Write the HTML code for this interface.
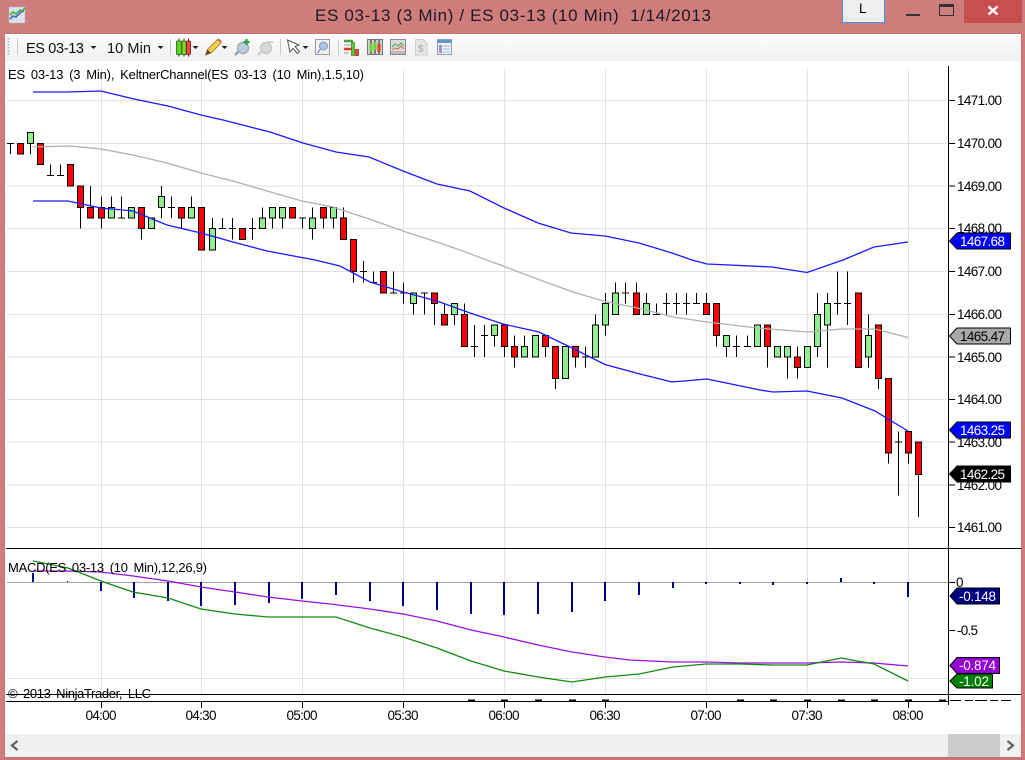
<!DOCTYPE html>
<html>
<head>
<meta charset="utf-8">
<title>ES 03-13 (3 Min) / ES 03-13 (10 Min) 1/14/2013</title>
<style>
html,body{margin:0;padding:0;background:#cf7c7d;width:1025px;height:760px;overflow:hidden}
svg{display:block;position:absolute;left:0;top:0}
text{font-family:"Liberation Sans",sans-serif;fill:#000;white-space:pre}
.ax{font-size:13.5px}
.w{fill:#fff}
.lb{font-size:13px;word-spacing:2.5px}
</style>
</head>
<body>
<svg width="1025" height="760" viewBox="0 0 1025 760" xmlns="http://www.w3.org/2000/svg">
<defs>
<linearGradient id="tb" x1="0" y1="0" x2="0" y2="1"><stop offset="0" stop-color="#fdfdfd"/><stop offset="1" stop-color="#efefef"/></linearGradient>
</defs>
<!-- frame -->
<rect width="1025" height="760" fill="#cf7c7d"/>
<rect x="0" y="758" width="1025" height="2" fill="#c97576"/>
<rect x="4.5" y="33.5" width="1017" height="724" fill="#b86a6b"/>
<rect x="5" y="34" width="1016" height="723" fill="#fff"/>

<!-- title bar -->
<g shape-rendering="auto">
<rect x="9" y="7" width="16" height="16" fill="#e4e8ee" stroke="#aab2c0" stroke-width=".6"/>
<path d="M9 11.5h16M9 15.5h16M9 19.5h16M13 7v16M17 7v16M21 7v16" stroke="#c3c9d3" stroke-width=".6" fill="none"/>
<path d="M10 19l3-3 3 1 5-5 3-1" stroke="#2f6fc4" stroke-width="1.6" fill="none"/>
<path d="M10 15l3-3 3 2 4-4 2 1 3-3" stroke="#46b03c" stroke-width="1.6" fill="none"/>
</g>
<text x="315" y="21" font-size="17" textLength="396" lengthAdjust="spacing" style="fill:#1c1c1c">ES 03-13 (3 Min) / ES 03-13 (10 Min)  1/14/2013</text>

<rect x="842.5" y="-2" width="42" height="24.5" fill="#efefef" stroke="#3d95ee" stroke-width="1"/>
<text x="859" y="13" font-size="13.5">L</text>
<rect x="906" y="14" width="14" height="2" fill="#333"/>
<rect x="939.5" y="4.5" width="14" height="11" fill="none" stroke="#333"/>
<rect x="939" y="4" width="15" height="3" fill="#333"/>
<rect x="964" y="0" width="58" height="23" fill="#c65050"/>
<path d="M988.5 6.5l9 8M997.5 6.5l-9 8" stroke="#fff" stroke-width="2.4" fill="none"/>

<!-- toolbar -->
<rect x="5" y="34" width="1016" height="27" fill="url(#tb)"/>
<path d="M8.5 38v17" stroke="#b5b5b5" stroke-width="2" stroke-dasharray="1.5 1.5" fill="none"/>
<path d="M17.5 38v17M170.5 39v16M280.5 39v16M338.5 39v16" stroke="#c8c8c8" fill="none" shape-rendering="crispEdges"/>
<text x="26" y="53" font-size="14.5" textLength="58" lengthAdjust="spacing" style="fill:#111">ES 03-13</text>
<text x="107" y="53" font-size="14.5" textLength="44" lengthAdjust="spacing" style="fill:#111">10 Min</text>
<path d="M90.500 46h6l-3 3zM157.500 46h6l-3 3zM192.500 46h6l-3 3zM221.500 46h6l-3 3zM302.500 46h6l-3 3z" fill="#222"/>

<!-- candle icon -->
<path d="M179 38.500v18M184 38.500v18M188.500 38.500v18" stroke="#333" fill="none"/>
<rect x="176.500" y="41" width="5" height="13.500" rx="1" fill="#5fd21f" stroke="#3e7a1f"/>
<rect x="182" y="41" width="4" height="13.500" rx="1" fill="#7bdc2a" stroke="#3e7a1f"/>
<rect x="186.500" y="41" width="4" height="13.500" rx="1" fill="#ee4a3a" stroke="#8c2a20"/>
<!-- pencil -->
<path d="M205.500 55l2-5.500 10-10 3.500 3.500-10 10z" fill="#f5d24a" stroke="#8f7a2c" stroke-width=".8"/>
<path d="M217.500 39.500l1.500-1 3 3-1 1.500z" fill="#e86a5a"/>
<path d="M205.500 55l2-5.500 3.500 3.500z" fill="#5a4a2a"/>
<!-- magnifier plus -->
<path d="M235 55l5-5" stroke="#8fa0b4" stroke-width="2.500" fill="none"/>
<circle cx="243" cy="48" r="5.500" fill="#b9cfe2" stroke="#a8a8a8" stroke-width="1.500"/>
<path d="M243.500 42h6M246.500 39v6" stroke="#1ea83a" stroke-width="2.200" fill="none"/>
<!-- magnifier disabled -->
<path d="M258 55l5-5" stroke="#cfcfcf" stroke-width="2.500" fill="none"/>
<circle cx="266" cy="48" r="5.500" fill="#d8d8d8" stroke="#c8c8c8" stroke-width="1.500"/>
<path d="M268 42h5" stroke="#cfcfcf" stroke-width="2" fill="none"/>
<!-- cursor -->
<path d="M287.500 40l2.500 12 3-3.500 4.500 5 2-2-4.500-5 4-1.500z" fill="#fff" stroke="#555" stroke-width="1"/>
<!-- zoom box -->
<rect x="315.500" y="39.500" width="14" height="15" fill="#f2f2f2" stroke="#9a9a9a"/>
<circle cx="323.500" cy="46" r="4" fill="#a9c6e4" stroke="#8a9bb0"/>
<path d="M317.500 53l3-4" stroke="#8a9bb0" stroke-width="1.500"/>
<!-- indicators icon -->
<path d="M344 41h9" stroke="#44aa33" stroke-width="2.500"/><path d="M344 49h9" stroke="#dd3a2e" stroke-width="2.500"/><path d="M344 45h7M344 53h5" stroke="#bbb" stroke-width="1.500"/>
<rect x="351.500" y="42.500" width="3" height="13" fill="#5fc52f" stroke="#3e7a1f" stroke-width=".7"/>
<rect x="355.500" y="49.500" width="3" height="6" fill="#e0503e" stroke="#8c2a20" stroke-width=".7"/>
<!-- chart icon -->
<rect x="367.500" y="39.500" width="15" height="15" fill="#d3d3d3" stroke="#777"/>
<path d="M371 40v14M375 40v14M379 40v14" stroke="#222"/>
<rect x="369.500" y="44" width="3" height="8" fill="#6fd12b"/><rect x="373.500" y="42" width="3" height="8" fill="#6fd12b"/><rect x="377.500" y="44" width="3" height="8" fill="#e0402e"/>
<!-- strategy chart icon -->
<rect x="390.500" y="39.500" width="15" height="15" fill="#dcdcdc" stroke="#8a8a8a"/>
<path d="M392 47l3-3 3 2 3-3 3 3" stroke="#4aa84a" fill="none"/><path d="M392 50l3-2 3 1 3-3 3 3" stroke="#d86a5a" fill="none"/>
<rect x="391" y="51" width="14" height="3" fill="#bbb"/>
<!-- $ doc -->
<path d="M415.500 39.500h8l3.500 3.500v12h-11.500z" fill="#e6e6e6" stroke="#cfcfcf"/>
<text x="418" y="52" font-size="10" font-weight="bold" style="fill:#b4b4b4">$</text>
<!-- grid doc -->
<rect x="437.500" y="39.500" width="14" height="15" fill="#eef2f6" stroke="#8fa0b4"/>
<rect x="438" y="40" width="13" height="3" fill="#5f97c8"/>
<rect x="439" y="45" width="3" height="8" fill="#a58cd6"/>
<path d="M443 46h7M443 49h7M443 52h7" stroke="#a9b6c4"/>

<!-- grid -->
<g shape-rendering="crispEdges" fill="none" stroke="#e2e2e2">
<path d="M101.500 69V694M201.500 69V694M302.500 69V694M403.500 69V694M504.500 69V694M605.500 69V694M706.500 69V694M807.500 69V694M908.500 69V694"/>
<path d="M7 100.500H948M7 143.500H948M7 186H948M7 228.500H948M7 271.500H948M7 314.500H948M7 357H948M7 399.500H948M7 442H948M7 485H948M7 527.500H948M7 678.500H948"/>
</g>

<!-- candles -->
<g shape-rendering="crispEdges">
<path fill="none" stroke="#000" d="M10.500 143.500V154M7 143.500h7M30.500 143.500V154M50.500 164.500V175.500M47 175.500h7M60.500 164.500V175.500M57 175.500h7M80.500 207.500V228.500M90.500 186V207.500M101.500 196.500V228.500M111.500 196.500V207.500M121.500 196.500V218M118 218h7M141.500 228.500V239.500M161.500 186V218M171.500 196.500V218M168 207.500h7M181.500 218V228.500M191.500 196.500V207.500M212.500 218V228.500M222.500 218V228.500M219 228.500h7M232.500 218V239.500M229 228.500h7M252.500 218V239.500M249 228.500h7M262.500 207.500V218M272.500 218V228.500M282.500 218V228.500M302.500 218V228.500M299 218h7M312.500 207.500V239.500M323.500 218V228.500M333.500 218V228.500M343.500 207.500V218M353.500 271.500V282.500M363.500 261V282.500M360 271.500h7M373.500 271.500V282.500M370 282.500h7M393.500 271.500V293M390 293h7M403.500 282.500V303.500M400 293h7M413.500 303.500V314.500M424.500 293V314.500M421 293h7M434.500 303.500V325M444.500 303.500V314.500M454.500 314.500V325M464.500 303.500V314.500M474.500 325V357M471 346.500h7M484.500 325V357M481 335.500h7M494.500 335.500V346.500M504.500 346.500V357M514.500 335.500V367.500M524.500 335.500V346.500M545.500 346.500V357M555.500 378.500V389M575.500 357V367.500M585.500 346.500V367.500M582 357h7M595.500 314.500V325M605.500 293V335.500M615.500 282.500V293M625.500 282.500V303.500M622 293h7M636.500 282.500V293M646.500 293V303.500M656.500 303.500V314.500M653 314.500h7M666.500 293V314.500M663 303.500h7M676.500 293V314.500M673 303.500h7M686.500 293V314.500M683 303.500h7M696.500 293V303.500M693 303.500h7M706.500 293V303.500M716.500 335.500V346.500M726.500 346.500V357M736.500 335.500V357M733 346.500h7M747.500 335.500V346.500M744 346.500h7M767.500 346.500V367.500M787.500 357V378.500M797.500 346.500V378.500M817.500 293V357M827.500 293V367.500M837.500 271.500V314.500M834 303.500h7M847.500 271.500V325M844 303.500h7M868.500 314.500V367.500M878.500 378.500V389M888.500 453V463.500M898.500 431.500V495.500M895 442h7M908.500 453V463.500M918.500 474.500V517"/>
<path fill="#ff0000" stroke="#000" d="M17.500 143.500h6v10.500h-6zM37.500 143.500h6v21h-6zM67.500 164.500h6v21.500h-6zM77.500 186h6v21.500h-6zM87.500 207.500h6v10.500h-6zM98.500 207.500h6v10.500h-6zM138.500 207.500h6v21h-6zM178.500 207.500h6v10.500h-6zM198.500 207.500h6v42.500h-6zM239.500 228.500h6v11h-6zM289.500 207.500h6v10.500h-6zM320.500 207.500h6v10.500h-6zM340.500 218h6v21.500h-6zM350.500 239.500h6v32h-6zM380.500 271.500h6v21.500h-6zM431.500 293h6v10.500h-6zM441.500 314.500h6v10.500h-6zM461.500 314.500h6v32h-6zM501.500 325h6v21.500h-6zM511.500 346.500h6v10.500h-6zM542.500 335.500h6v11h-6zM552.500 346.500h6v32h-6zM572.500 346.500h6v10.500h-6zM633.500 293h6v21.500h-6zM703.500 303.500h6v11h-6zM713.500 303.500h6v32h-6zM764.500 325h6v21.500h-6zM794.500 357h6v10.500h-6zM855.500 293h6v74.500h-6zM875.500 325h6v53.500h-6zM885.500 378.500h6v74.500h-6zM905.500 431.500h6v21.500h-6zM915.500 442h6v32.500h-6z"/>
<path fill="#90ee90" stroke="#000" d="M27.500 132.500h6v11h-6zM108.500 207.500h6v10.500h-6zM128.500 207.500h6v10.500h-6zM148.500 218h6v10.500h-6zM158.500 196.500h6v11h-6zM188.500 207.500h6v10.500h-6zM209.500 228.500h6v21.500h-6zM259.500 218h6v10.500h-6zM269.500 207.500h6v10.500h-6zM279.500 207.500h6v10.500h-6zM309.500 218h6v10.500h-6zM330.500 207.500h6v10.500h-6zM410.500 293h6v10.500h-6zM451.500 303.500h6v11h-6zM491.500 325h6v10.500h-6zM521.500 346.500h6v10.500h-6zM532.500 335.500h6v21.500h-6zM562.500 346.500h6v32h-6zM592.500 325h6v32h-6zM602.500 303.500h6v21.500h-6zM612.500 293h6v21.500h-6zM643.500 303.500h6v11h-6zM723.500 335.500h6v11h-6zM754.500 325h6v21.500h-6zM774.500 346.500h6v10.500h-6zM784.500 346.500h6v10.500h-6zM804.500 346.500h6v21h-6zM814.500 314.500h6v32h-6zM824.500 303.500h6v21.500h-6zM865.500 335.500h6v21.500h-6z"/>
</g>

<!-- keltner -->
<g fill="none" stroke-width="1.300">
<polyline stroke="#b0b0b0" points="33,147 70,146 101,149 133,155 167,163 201,173 233,181 267,191 302,201 333,207 369,219 403,231 437,242 460,250 503,266 540,280 573,292 605,301.500 640,308.500 673,317 707,322 757,328 807,332 842,329 875,329 908,337.500"/>
<polyline stroke="#1a1aff" points="33,92 67,92 101,91 134,99 168,106 201,115 223,120 270,132 303,143 336,152 369,157 403,171 437,184 470,191 504,208 538,223 571,233 605,236 639,243 672,253 692,260 707,264 772,267 807,272.500 843,260 874,247 908,242"/>
<polyline stroke="#1a1aff" points="33,201 68,201 101,208 133,211 167,225 201,233 233,242 267,251 315,260 340,266 370,282 403,292 437,301 470,313 503,324 539,332 570,347 605,364.500 640,374 672,382 707,379 760,390 773,392 807,391 842,398 875,411 908,431"/>
</g>

<!-- axes -->
<g shape-rendering="crispEdges" fill="none" stroke="#000">
<path d="M948.500 66V705"/>
<path d="M6 548.500H1021M6 694.500H1021M6 701.500H948"/>
<path d="M948 100.500h7M948 143.500h7M948 186h7M948 228.500h7M948 271.500h7M948 314.500h7M948 357h7M948 399.500h7M948 442h7M948 485h7M948 527.500h7M948 582.500h7M948 630.500h7"/>
<path d="M101.500 702v6M201.500 702v6M302.500 702v6M403.500 702v6M504.500 702v6M605.500 702v6M706.500 702v6M807.500 702v6M908.500 702v6"/>
<path d="M468 700.500h7M501 700.500h7M535 700.500h7M569 700.500h7M602 700.500h7M737 700.500h7M770 700.500h7M804 700.500h7M838 700.500h7M871 700.500h7M905 700.500h7M939 700.500h7" stroke-width="2"/>
<path d="M950 700.500h11M965 700.500h8M975 700.500h12M990 700.500h8M1001 700.500h10"/>
</g>

<!-- MACD -->
<path d="M7 582.500H948" stroke="#a2a2a2" shape-rendering="crispEdges"/>
<g shape-rendering="crispEdges" fill="#000080">
<rect x="32" y="573" width="2" height="9"/><rect x="67" y="581" width="1" height="1"/><rect x="100" y="582" width="2" height="9"/><rect x="133" y="582" width="2" height="16"/><rect x="167" y="582" width="2" height="19"/><rect x="200" y="582" width="2" height="24"/><rect x="234" y="582" width="2" height="23"/><rect x="268" y="582" width="2" height="21"/><rect x="301" y="582" width="2" height="17"/><rect x="335" y="582" width="2" height="13"/><rect x="369" y="582" width="2" height="19"/><rect x="402" y="582" width="2" height="24"/><rect x="436" y="582" width="2" height="28"/><rect x="470" y="582" width="2" height="32"/><rect x="503" y="582" width="2" height="33"/><rect x="537" y="582" width="2" height="32"/><rect x="571" y="582" width="2" height="30"/><rect x="604" y="582" width="2" height="19"/><rect x="638" y="582" width="2" height="13"/><rect x="672" y="582" width="2" height="6"/><rect x="705" y="582" width="2" height="2"/><rect x="739" y="582" width="2" height="2"/><rect x="772" y="582" width="2" height="3"/><rect x="806" y="582" width="2" height="2"/><rect x="840" y="578" width="2" height="4"/><rect x="873" y="582" width="2" height="2"/><rect x="907" y="582" width="2" height="15"/>
</g>
<g fill="none" stroke-width="1.300">
<polyline stroke="#9a10e0" points="33,571 67,571 101,572 133,576 168,581 201,587 235,592 268,597 302,601 330,604 370,609 403,614 437,621 471,630 504,637 538,645 572,652 605,657 630,660 673,662 706,662 740,663 807,663 841,662 874,663 908,666"/>
<polyline stroke="#118a11" points="33,561 68,568 101,581 133,592 168,598 201,609 235,614 268,617 336,617 370,628 403,637 437,648 471,661 504,671 538,677 572,682 605,677 639,674 673,667 706,664 740,664 773,665 807,665 841,658 874,664 908,681"/>
</g>

<!-- price tags -->
<path d="M949.500 241l7.500-8h53.500v16H957z" fill="#0000ff" stroke="#000"/>
<path d="M949.500 336l7.500-8h53.500v16H957z" fill="#a9a9a9" stroke="#000"/>
<path d="M949.500 430l7.500-8h53.500v16H957z" fill="#0000ff" stroke="#000"/>
<path d="M949.500 474l7.500-8h53.500v16H957z" fill="#000" stroke="#000"/>
<path d="M950 596l7-8h42.500v16H957z" fill="#000080" stroke="#000"/>
<path d="M950 665.500l7-8h42.500v16H957z" fill="#9400d3" stroke="#000"/>
<path d="M950 681l7-7h35.500v14H957z" fill="#008000" stroke="#000"/>

<!-- axis labels -->
<g class="ax">
<text x="957" y="105" textLength="45">1471.00</text>
<text x="957" y="148" textLength="45">1470.00</text>
<text x="957" y="191" textLength="45">1469.00</text>
<text x="957" y="233" textLength="45">1468.00</text>
<text x="957" y="276" textLength="45">1467.00</text>
<text x="957" y="319" textLength="45">1466.00</text>
<text x="957" y="362" textLength="45">1465.00</text>
<text x="957" y="404" textLength="45">1464.00</text>
<text x="957" y="447" textLength="45">1463.00</text>
<text x="957" y="490" textLength="45">1462.00</text>
<text x="957" y="532" textLength="45">1461.00</text>
<text x="960" y="246" textLength="45" class="w">1467.68</text>
<text x="960" y="341" textLength="45">1465.47</text>
<text x="960" y="435" textLength="45" class="w">1463.25</text>
<text x="960" y="479" textLength="45" class="w">1462.25</text>
<text x="956" y="587">0</text>
<text x="957" y="635" textLength="21">-0.5</text>
<text x="959" y="601" textLength="37" class="w">-0.148</text>
<text x="959" y="670" textLength="37" class="w">-0.874</text>
<text x="959" y="686" textLength="30" class="w">-1.02</text>
<text x="85.500" y="720" textLength="31">04:00</text>
<text x="185.500" y="720" textLength="31">04:30</text>
<text x="286.500" y="720" textLength="31">05:00</text>
<text x="387.500" y="720" textLength="31">05:30</text>
<text x="488.500" y="720" textLength="31">06:00</text>
<text x="589.500" y="720" textLength="31">06:30</text>
<text x="690.500" y="720" textLength="31">07:00</text>
<text x="791.500" y="720" textLength="31">07:30</text>
<text x="892.500" y="720" textLength="31">08:00</text>
</g>
<text class="lb" x="8" y="79" textLength="356">ES 03-13 (3 Min), KeltnerChannel(ES 03-13 (10 Min),1.5,10)</text>
<text class="lb" x="8" y="572" textLength="199">MACD(ES 03-13 (10 Min),12,26,9)</text>
<text class="lb" x="8" y="698" textLength="143">© 2013 NinjaTrader, LLC</text>

<!-- scrollbar -->
<rect x="5" y="734" width="1016" height="23" fill="#f0f0f0"/>
<rect x="948" y="734" width="52" height="23" fill="#cdcdcd"/>
<path d="M17.500 741l-5.500 4.500 5.500 4.500" fill="none" stroke="#606060" stroke-width="2.200"/>
<path d="M1007.500 741l5.500 4.500-5.500 4.500" fill="none" stroke="#606060" stroke-width="2.200"/>
</svg>
</body>
</html>
